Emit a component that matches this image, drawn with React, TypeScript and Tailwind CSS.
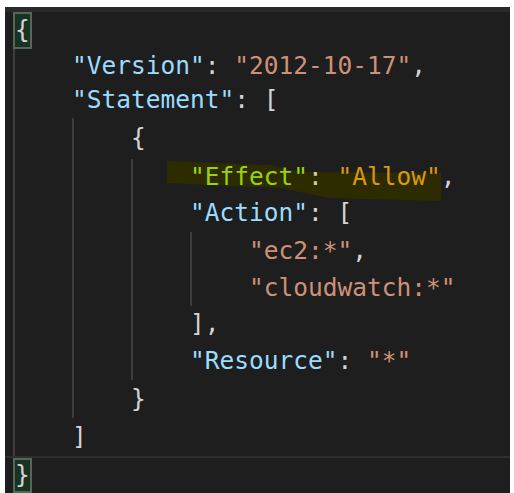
const KEY = 'text-[#9cdcfe]';
const STR = 'text-[#ce9178]';
const PUN = 'text-[#d4d4d4]';

function Indent({ levels }: { levels: number }) {
  return (
    <>
      {Array.from({ length: levels }).map((_, i) => (
        <span key={i} className="inline-block h-full w-[4ch] shrink-0 border-l-2 border-[#3e3e3e]" />
      ))}
    </>
  );
}

function Line({ h, levels = 0, children, className = '' }: { h: string; levels?: number; children: React.ReactNode; className?: string }) {
  return (
    <div className={`flex items-stretch ${h} ${className}`}>
      <Indent levels={levels} />
      <div className="relative z-10 flex items-center whitespace-pre">{children}</div>
    </div>
  );
}

export default function App() {
  return (
    <div className="w-[514px] h-[493px] bg-white pl-[5px] pt-[7px] pr-[4px] overflow-hidden">
      <div className="h-full bg-[#1e1e1e] flex flex-col">
        <div className="h-[5px] bg-[#2a2a2a]" />
        <div
          className="relative flex-1 pl-[8px] text-[24.5px] leading-none"
          style={{ fontFamily: '"DejaVu Sans Mono", "Liberation Mono", monospace' }}
        >
          {/* marker highlight behind the Effect line */}
          <svg className="absolute left-[162px] top-[149px]" width="274" height="40" viewBox="0 0 274 40">
            <polygon points="0,0 103,4 133,11 274,12 274,40 163,37 113,27 0,22" fill="#2d2c00" />
          </svg>

          <Line h="h-[37px]">
            <span className="flex h-full items-center border-2 border-[#56675a] bg-[#183322] text-[#d4d4d4]">{'{'}</span>
          </Line>
          <Line h="h-[34px]" levels={1}>
            <span className={KEY}>"Version"</span>
            <span className={PUN}>: </span>
            <span className={STR}>"2012-10-17"</span>
            <span className={PUN}>,</span>
          </Line>
          <Line h="h-[35px]" levels={1}>
            <span className={KEY}>"Statement"</span>
            <span className={PUN}>: [</span>
          </Line>
          <Line h="h-[41px]" levels={2}>
            <span className={PUN}>{'{'}</span>
          </Line>
          <Line h="h-[36px]" levels={3}>
            <span className="text-[#9bd20c]">"Effect"</span>
            <span className="text-[#d2d29a]">: </span>
            <span className="text-[#d9980f]">"Allow"</span>
            <span className={PUN}>,</span>
          </Line>
          <Line h="h-[37px]" levels={3}>
            <span className={KEY}>"Action"</span>
            <span className={PUN}>: [</span>
          </Line>
          <Line h="h-[38px]" levels={4}>
            <span className={STR}>"ec2:*"</span>
            <span className={PUN}>,</span>
          </Line>
          <Line h="h-[36px]" levels={4}>
            <span className={STR}>"cloudwatch:*"</span>
          </Line>
          <Line h="h-[37px]" levels={3}>
            <span className={PUN}>],</span>
          </Line>
          <Line h="h-[37px]" levels={3}>
            <span className={KEY}>"Resource"</span>
            <span className={PUN}>: </span>
            <span className={STR}>"*"</span>
          </Line>
          <Line h="h-[38px]" levels={2}>
            <span className={PUN}>{'}'}</span>
          </Line>
          <Line h="h-[38px]" levels={1}>
            <span className={PUN}>]</span>
          </Line>
          <div className="-ml-[8px] border-t-2 border-[#2e2e2e] pl-[8px]">
            <Line h="h-[35px]">
              <span className="flex h-full items-center border-2 border-[#56675a] bg-[#183322] text-[#d4d4d4]">{'}'}</span>
            </Line>
          </div>
        </div>
      </div>
    </div>
  );
}
